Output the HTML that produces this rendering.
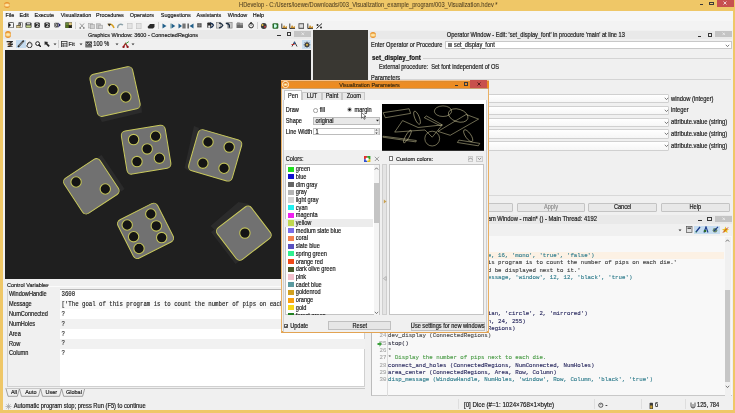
<!DOCTYPE html><html><head><meta charset="utf-8"><style>
*{margin:0;padding:0;box-sizing:border-box}
html,body{width:735px;height:413px;overflow:hidden;background:#f0f0f0;font-family:"Liberation Sans",sans-serif;color:#1e1e1e}
.a{position:absolute}
.t{position:absolute;white-space:nowrap;line-height:0;height:0;-webkit-text-stroke-width:0.17px}
.m{position:absolute;white-space:pre;line-height:0;height:0;font-family:"Liberation Mono",monospace;-webkit-text-stroke-width:0.12px}
svg{position:absolute;left:0;top:0}
</style></head><body><div id="w" style="position:absolute;left:0;top:0;width:735px;height:413px;overflow:hidden;will-change:transform;filter:blur(0.3px)">
<div class="a" style="left:0px;top:0px;width:735px;height:10.8px;background:#efc767;"></div>
<div class="a" style="left:0px;top:0px;width:3px;height:413px;background:#efc767;"></div>
<div class="a" style="left:733px;top:0px;width:2px;height:413px;background:#efc767;"></div>
<div class="a" style="left:0px;top:410px;width:735px;height:3px;background:#efc767;"></div>
<div class="a" style="left:4.3px;top:1.9000000000000004px;width:6px;height:6px;border-radius:50%;background:radial-gradient(ellipse 60% 35% at 50% 52%,#fff0c0 0%,#fbd890 50%,#e8922c 100%)"></div>
<div class="t" style="left:239px;top:4.5px;font-size:5.72px;color:#4e3e22;transform:scaleY(1.12);-webkit-text-stroke-width:0.05px">HDevelop - C:/Users/loewe/Downloads/003_Visualization_example_program/003_Visualization.hdev *</div>
<div class="a" style="left:700px;top:4.2px;width:3.2px;height:1.1px;background:#3a3a3a;"></div>
<div class="a" style="left:709.4px;top:1.6px;width:4.4px;height:3.4px;border:0.8px solid #3a3a3a;border-top-width:1.3px"></div>
<div class="a" style="left:3px;top:10.8px;width:730px;height:19.2px;background:#f3f3f3;"></div>
<div class="a" style="left:3px;top:10.8px;width:730px;height:10.2px;background:#f6f6f6;"></div>
<div class="t" style="left:5.5px;top:15.3px;font-size:5.45px;color:#202020;transform:scaleY(1.12);">File</div>
<div class="t" style="left:19.5px;top:15.3px;font-size:5.45px;color:#202020;transform:scaleY(1.12);">Edit</div>
<div class="t" style="left:34.5px;top:15.3px;font-size:5.45px;color:#202020;transform:scaleY(1.12);">Execute</div>
<div class="t" style="left:60.8px;top:15.3px;font-size:5.45px;color:#202020;transform:scaleY(1.12);">Visualization</div>
<div class="t" style="left:96px;top:15.3px;font-size:5.45px;color:#202020;transform:scaleY(1.12);">Procedures</div>
<div class="t" style="left:129.8px;top:15.3px;font-size:5.45px;color:#202020;transform:scaleY(1.12);">Operators</div>
<div class="t" style="left:160.8px;top:15.3px;font-size:5.45px;color:#202020;transform:scaleY(1.12);">Suggestions</div>
<div class="t" style="left:196.5px;top:15.3px;font-size:5.45px;color:#202020;transform:scaleY(1.12);">Assistants</div>
<div class="t" style="left:227.8px;top:15.3px;font-size:5.45px;color:#202020;transform:scaleY(1.12);">Window</div>
<div class="t" style="left:252.8px;top:15.3px;font-size:5.45px;color:#202020;transform:scaleY(1.12);">Help</div>
<svg class="a" style="left:7.9px;top:22.1px" width="6" height="6.3" viewBox="0 0 6 6.3"><rect x="0.4" y="0.4" width="5.2" height="5.5" rx="1" fill="#f4f4f4" stroke="#2a2a2a" stroke-width="0.8"/><path d="M0.6 0.8 L3 3.1 L0.6 5.6Z" fill="#151515"/></svg>
<svg class="a" style="left:16.4px;top:22.1px" width="7" height="6.3" viewBox="0 0 7 6.3"><rect x="2.5" y="0.4" width="4" height="5.2" rx="0.8" fill="#eee" stroke="#444" stroke-width="0.6"/><path d="M3.5 0.8 q1.5 1.2 0 3 H1" stroke="#111" stroke-width="1.1" fill="none"/><path d="M0.3 3.5 H4.5 L4 5.9 H0.6Z" fill="#d8c890" stroke="#5a4a2a" stroke-width="0.5"/></svg>
<svg class="a" style="left:25.2px;top:22.1px" width="7" height="6.3" viewBox="0 0 7 6.3"><rect x="0.5" y="0.4" width="6" height="5.5" rx="1.2" fill="#2e2e2e"/><rect x="1.8" y="0.9" width="3.4" height="1.6" fill="#ccc"/><rect x="1.2" y="3.4" width="4.6" height="2.2" fill="#c8d890"/></svg>
<svg class="a" style="left:34.1px;top:22px" width="6.2" height="6.2" viewBox="0 0 6.2 6.2"><rect x="0.4" y="0.4" width="5.4" height="5.4" rx="1.2" fill="#2a2a2a"/><path d="M1.8 2 q1.3 -1.3 2.6 0 q0 1.2 -2 2.5 h2.2" stroke="#eee" stroke-width="0.8" fill="none"/></svg>
<svg class="a" style="left:43.6px;top:22px" width="6.2" height="6.2" viewBox="0 0 6.2 6.2"><rect x="0.4" y="0.4" width="5.4" height="5.4" rx="1.2" fill="#2a2a2a"/><path d="M1.8 2 q1.3 -1.3 2.6 0 q0 1.2 -2 2.5 h2.2" stroke="#eee" stroke-width="0.8" fill="none"/></svg>
<svg class="a" style="left:53.9px;top:22px" width="7.2" height="6.2" viewBox="0 0 7.2 6.2"><rect x="0.3" y="0.8" width="4" height="4.6" rx="0.8" fill="#555"/><path d="M1 1.5 L3 3.1 L1 4.7" stroke="#ddd" stroke-width="0.7" fill="none"/><path d="M4 0.5 L6.9 3.1 L4 5.8 L4.8 3.1Z" fill="#1a1a60"/></svg>
<svg class="a" style="left:65px;top:22px" width="7.4" height="6.3" viewBox="0 0 7.4 6.3"><rect x="0.3" y="0.3" width="6.8" height="5.7" fill="#3a3a2a"/><rect x="0.6" y="0.6" width="3" height="2.5" fill="#6a8a3a"/><rect x="3.8" y="0.6" width="3" height="2.5" fill="#e0c880"/><rect x="0.6" y="3.3" width="3" height="2.5" fill="#5a7a20"/><path d="M4 3.6 L6.6 5.8 M6.6 3.6 L4 5.8" stroke="#111" stroke-width="0.7"/></svg>
<div class="a" style="left:75px;top:22px;width:0.8px;height:7px;background:#d0d0d0;"></div>
<svg class="a" style="left:78.7px;top:22.5px" width="6" height="6" viewBox="0 0 6 6"><path d="M1 0.5 L5 5 M5 0.5 L1 5" stroke="#9a9a9a" stroke-width="1"/><circle cx="1.2" cy="5" r="0.9" fill="#888"/><circle cx="4.8" cy="5" r="0.9" fill="#888"/></svg>
<svg class="a" style="left:87.9px;top:22.5px" width="7" height="6" viewBox="0 0 7 6"><rect x="0.5" y="0.5" width="3.8" height="4.5" fill="#d8d8d8" stroke="#a8a8a8" stroke-width="0.6"/><rect x="2.5" y="1.5" width="3.8" height="4.3" fill="#d0d0d0" stroke="#a0a0a0" stroke-width="0.6"/></svg>
<svg class="a" style="left:96.4px;top:22.5px" width="7" height="6" viewBox="0 0 7 6"><rect x="0.5" y="0.8" width="4" height="4.8" fill="#c8c8c8" stroke="#a0a0a0" stroke-width="0.6"/><rect x="2.8" y="2.2" width="3.5" height="3.6" fill="#d8d8d8" stroke="#999" stroke-width="0.6"/></svg>
<svg class="a" style="left:107.4px;top:22.5px" width="8" height="6" viewBox="0 0 8 6"><path d="M1 2 q3 -2 5 1 l1 2" stroke="#d8a020" stroke-width="1.6" fill="none"/><path d="M0.5 0.5 l2 3 l1.5 -2.5z" fill="#333"/></svg>
<svg class="a" style="left:116.6px;top:22.5px" width="7" height="6" viewBox="0 0 7 6"><path d="M6 2 q-3 -2 -5 1 l-0.5 2" stroke="#8aa0a8" stroke-width="1.4" fill="none"/></svg>
<svg class="a" style="left:127px;top:22.5px" width="6" height="6" viewBox="0 0 6 6"><rect x="0.6" y="0.4" width="4.5" height="5.3" fill="#e4e4e4" stroke="#c0c0c0" stroke-width="0.6"/></svg>
<svg class="a" style="left:136px;top:22.5px" width="6" height="6" viewBox="0 0 6 6"><rect x="0.6" y="0.4" width="4.5" height="5.3" fill="#e4e4e4" stroke="#c0c0c0" stroke-width="0.6"/></svg>
<svg class="a" style="left:147px;top:22.5px" width="8" height="6" viewBox="0 0 8 6"><path d="M0.5 4 L3 1 H7.5 V4 L6 5.5 H1.5Z" fill="#2a2a2a"/></svg>
<div class="a" style="left:157.5px;top:22px;width:0.8px;height:7px;background:#d0d0d0;"></div>
<svg class="a" style="left:161.7px;top:22.5px" width="5" height="6" viewBox="0 0 5 6"><path d="M0.5 0.5 L4.5 3 L0.5 5.5Z" fill="#22608a"/></svg>
<svg class="a" style="left:170.3px;top:22.5px" width="6" height="6" viewBox="0 0 6 6"><rect x="0.3" y="0.5" width="1" height="5" fill="#8aa"/><path d="M1.5 0.5 L5.3 3 L1.5 5.5Z" fill="#22608a"/></svg>
<svg class="a" style="left:178px;top:22.5px" width="8" height="6" viewBox="0 0 8 6"><path d="M0.5 0.5 L4 3 L0.5 5.5Z" fill="#22608a"/><rect x="4.5" y="0.5" width="1.3" height="5" fill="#555"/><rect x="6.2" y="0.5" width="1.3" height="5" fill="#555"/></svg>
<svg class="a" style="left:187.4px;top:22.5px" width="7" height="6" viewBox="0 0 7 6"><rect x="0.5" y="0.5" width="1.3" height="5" fill="#444"/><path d="M6.5 0.5 L2.5 3 L6.5 5.5Z" fill="#22608a"/></svg>
<svg class="a" style="left:197px;top:23.2px" width="5" height="4.5" viewBox="0 0 5 4.5"><rect x="0.2" y="0.2" width="4.4" height="4.2" fill="#555"/><path d="M2.2 0.2 V4.4 M0.2 2.2 H4.6" stroke="#aaa" stroke-width="0.5"/></svg>
<svg class="a" style="left:206.8px;top:22.4px" width="8" height="6.4" viewBox="0 0 8 6.4"><rect x="0.3" y="0.5" width="4" height="5.6" rx="0.8" fill="#2a2a2a"/><path d="M3 1 q3 0.5 3.5 2.2 q-0.5 2 -3.5 2.6" stroke="#1a3050" stroke-width="1.3" fill="none"/><rect x="1.2" y="3.5" width="2" height="2.3" fill="#eee"/></svg>
<svg class="a" style="left:216.2px;top:22.4px" width="8" height="6.4" viewBox="0 0 8 6.4"><rect x="0.3" y="0.5" width="4.5" height="5.6" fill="#d8d8d8" stroke="#777" stroke-width="0.6"/><path d="M3 1.2 q3 0.4 3.8 2 q-0.8 2 -3.8 2.6" stroke="#1e2e40" stroke-width="1.3" fill="none"/></svg>
<svg class="a" style="left:224.8px;top:22.4px" width="8" height="6.4" viewBox="0 0 8 6.4"><rect x="2.8" y="0.5" width="4.3" height="5.6" fill="#c8c8c8" stroke="#777" stroke-width="0.6"/><path d="M0.8 1.2 q3 0.2 3.5 2.2 l0 2.4" stroke="#1e2e40" stroke-width="1.4" fill="none"/></svg>
<svg class="a" style="left:235.8px;top:22.4px" width="8" height="6.4" viewBox="0 0 8 6.4"><rect x="0.5" y="1.2" width="6.5" height="4.8" fill="#6a6a6a"/><rect x="1" y="0.4" width="2.8" height="2.6" fill="#8a8a8a"/><rect x="4" y="0.8" width="2.8" height="2.4" fill="#999"/></svg>
<svg class="a" style="left:247.8px;top:22.4px" width="6.5" height="6.5" viewBox="0 0 6.5 6.5"><circle cx="3.1" cy="3.6" r="2.3" fill="#eee" stroke="#2a2a2a" stroke-width="1"/><path d="M3.1 3.6 V2.3 M2.2 0.5 H4" stroke="#2a2a2a" stroke-width="0.8"/></svg>
<div class="a" style="left:257px;top:22px;width:0.8px;height:7px;background:#d0d0d0;"></div>
<svg class="a" style="left:260px;top:22.5px" width="8" height="6" viewBox="0 0 8 6"><circle cx="3.8" cy="3" r="2.9" fill="#3a3a3a"/><circle cx="2.5" cy="2" r="1" fill="#e8c040"/><circle cx="5" cy="3.8" r="1" fill="#c04040"/></svg>
<svg class="a" style="left:271.7px;top:22.5px" width="7" height="6" viewBox="0 0 7 6"><rect x="0.5" y="0.3" width="5.8" height="5.5" rx="1" fill="#2a6a2a"/><path d="M2 1.3 h1.5 a1.8 1.8 0 0 1 0 3.5 h-1.5z" fill="#cfe"/></svg>
<svg class="a" style="left:281px;top:22.5px" width="7" height="6" viewBox="0 0 7 6"><path d="M0.8 0.5 V5.5 H6" stroke="#2a2a2a" stroke-width="0.9" fill="none"/><path d="M1.5 5 L3 2 L4.5 4 L6 3 V5.2Z" fill="#c89030"/></svg>
<svg class="a" style="left:289px;top:22.5px" width="7" height="6" viewBox="0 0 7 6"><path d="M0.8 0.5 V5.5 H6" stroke="#2a2a2a" stroke-width="0.9" fill="none"/><path d="M1.5 5 L3 2 L4.5 4 L6 3 V5.2Z" fill="#c89030"/></svg>
<svg class="a" style="left:307.2px;top:22.5px" width="7" height="6" viewBox="0 0 7 6"><path d="M0.8 0.5 V5.5 H6" stroke="#2a2a2a" stroke-width="0.9" fill="none"/><path d="M1.5 5 L3 2 L4.5 4 L6 3 V5.2Z" fill="#c89030"/></svg>
<svg class="a" style="left:298px;top:22.5px" width="7" height="6" viewBox="0 0 7 6"><rect x="0.5" y="0.3" width="5.5" height="5.5" fill="#444"/><rect x="1.3" y="1.2" width="4" height="3.6" fill="#ddd"/></svg>
<svg class="a" style="left:316.4px;top:22.5px" width="7" height="6" viewBox="0 0 7 6"><path d="M0.5 5.5 L6 0.5" stroke="#2a2a2a" stroke-width="1"/><circle cx="1.5" cy="2" r="1" fill="#2a2a2a"/><circle cx="5" cy="4.5" r="1" fill="#2a2a2a"/></svg>
<div class="a" style="left:311px;top:30px;width:58px;height:185px;background:#ececec;"></div>
<div class="a" style="left:313px;top:30px;width:55px;height:185px;background:#393732;"></div>
<div class="a" style="left:3px;top:30px;width:308px;height:250px;background:#f0f0f0;"></div>
<div class="a" style="left:3px;top:30px;width:308px;height:8.5px;background:#e9e9e9;"></div>
<div class="a" style="left:4.6px;top:31.3px;width:6.4px;height:6.4px;border-radius:50%;background:radial-gradient(ellipse 60% 35% at 50% 52%,#fff0c0 0%,#fbd890 50%,#e8922c 100%)"></div>
<div class="t" style="left:88px;top:34.5px;font-size:5.5px;color:#202020;transform:scaleY(1.12);">Graphics Window: 3600 - ConnectedRegions</div>
<div class="a" style="left:277px;top:35px;width:3.6px;height:1.1px;background:#333;"></div>
<div class="a" style="left:287px;top:32px;width:4.4px;height:4px;border:0.6px solid #3a3a3a;border-top-width:1.1px"></div>
<div class="a" style="left:294.3px;top:30.5px;width:17px;height:6.6px;background:#c4c4c4;"></div>
<svg class="a" style="left:301.0px;top:32.0px" width="3.6" height="3.6" viewBox="0 0 3.6 3.6"><path d="M0.5 0.5 L3.1 3.1 M3.1 0.5 L0.5 3.1" stroke="#f4f4f4" stroke-width="0.7"/></svg>
<svg class="a" style="left:6.2px;top:41px" width="7.2" height="6.4" viewBox="0 0 7.2 6.4"><path d="M0.6 0.6 H6.5 L2.2 3.2 H6.5 L2 5.8 H6.6" stroke="#2a2a2a" stroke-width="1.2" fill="none" stroke-linejoin="round"/><path d="M1.6 2.2 H4.5 M1.8 4.4 H4.8" stroke="#b87030" stroke-width="0.6"/></svg>
<div class="a" style="left:16.1px;top:39.5px;width:9.6px;height:8.4px;background:#c5dcf0;"></div>
<svg class="a" style="left:17px;top:40px" width="8" height="7.5" viewBox="0 0 8 7.5"><path d="M1.5 6.3 L6.3 1.2" stroke="#2a2a2a" stroke-width="1.8" stroke-linecap="round"/><path d="M2 5.8 L5.8 1.7" stroke="#f0f0f0" stroke-width="0.6"/><path d="M0.8 7 L1.4 5.6 L2.2 6.4Z" fill="#222"/></svg>
<svg class="a" style="left:26.4px;top:40.5px" width="7" height="7" viewBox="0 0 7 7"><path d="M1.6 4.2 V2.4 q0.6 -0.8 1.1 0 V1.4 q0.6 -0.8 1.1 0 V1.8 q0.6 -0.8 1.1 0 V2.6 q0.6 -0.6 1 0.1 V4.6 q0 2 -2.4 2.1 q-2 0 -2.9 -2z" fill="#f4f4f4" stroke="#1e1e1e" stroke-width="0.9"/></svg>
<svg class="a" style="left:34.9px;top:40.8px" width="6.5" height="6.5" viewBox="0 0 6.5 6.5"><circle cx="2.6" cy="2.6" r="1.9" fill="#fafafa" stroke="#1e1e1e" stroke-width="1"/><path d="M4 4 L5.9 5.9" stroke="#1e1e1e" stroke-width="1.4" stroke-linecap="round"/></svg>
<svg class="a" style="left:44px;top:40.8px" width="6.5" height="6.5" viewBox="0 0 6.5 6.5"><path d="M0.5 0.5 L0.7 4.3 L1.8 3.3 L4.5 6 L5.8 4.8 L3.1 2.1 L4.3 1Z" fill="#2a2a2a"/></svg>
<svg class="a" style="left:52.5px;top:43.2px" width="4" height="3" viewBox="0 0 4 3"><path d="M0.5 0.5 L2 2.3 L3.5 0.5Z" fill="#333"/></svg>
<div class="a" style="left:58px;top:40px;width:0.8px;height:8px;background:#cfcfcf;"></div>
<svg class="a" style="left:61px;top:41px" width="7" height="6" viewBox="0 0 7 6"><rect x="0.5" y="0.5" width="5.5" height="5.5" fill="none" stroke="#333" stroke-width="0.8"/><path d="M0.5 2.5 H6 M0.5 4.2 H6 M2.4 2.5 V6" stroke="#333" stroke-width="0.6"/></svg>
<div class="t" style="left:68.6px;top:44.2px;font-size:5.5px;color:#202020;transform:scaleY(1.12);">Fit</div>
<svg class="a" style="left:78.5px;top:43.2px" width="4" height="3" viewBox="0 0 4 3"><path d="M0.5 0.5 L2 2.3 L3.5 0.5Z" fill="#333"/></svg>
<svg class="a" style="left:84.8px;top:40.8px" width="7.5" height="6.8" viewBox="0 0 7.5 6.8"><rect x="0.4" y="0.4" width="6.6" height="6" fill="#4a4a4a"/><path d="M0.8 2.2 L2.5 3.5 L4.5 1.8 L6.6 3.6" stroke="#e8e8e8" stroke-width="0.8" fill="none"/><rect x="1" y="4.3" width="5.4" height="1.6" fill="#777"/></svg>
<div class="t" style="left:93.3px;top:44.2px;font-size:5.6px;color:#202020;transform:scaleY(1.12);">100 %</div>
<svg class="a" style="left:115px;top:43.2px" width="4" height="3" viewBox="0 0 4 3"><path d="M0.5 0.5 L2 2.3 L3.5 0.5Z" fill="#333"/></svg>
<svg class="a" style="left:121.5px;top:40.6px" width="8" height="7" viewBox="0 0 8 7"><path d="M1 6.5 L3.5 2.5 L6 6.5" stroke="#a02020" stroke-width="1.3" fill="none"/><circle cx="1.6" cy="5.9" r="1.1" fill="#901818"/><circle cx="5.6" cy="5.9" r="1.1" fill="#901818"/><path d="M3.3 3 L6.8 0.6" stroke="#3a9a3a" stroke-width="1"/></svg>
<svg class="a" style="left:131px;top:43.2px" width="4" height="3" viewBox="0 0 4 3"><path d="M0.5 0.5 L2 2.3 L3.5 0.5Z" fill="#333"/></svg>
<svg class="a" style="left:291.4px;top:41px" width="7" height="6" viewBox="0 0 7 6"><path d="M1 5.5 L3.5 0.8 L6 5.5" stroke="#2a2a2a" stroke-width="0.9" fill="none"/><path d="M0.5 3.5 h3" stroke="#c03030" stroke-width="1"/><path d="M3.5 0.8 V3" stroke="#2a5aa0" stroke-width="1"/></svg>
<div class="a" style="left:301.5px;top:39.5px;width:9.5px;height:9px;background:#c9def0;"></div>
<svg class="a" style="left:302.5px;top:40.5px" width="8" height="7" viewBox="0 0 8 7"><circle cx="4" cy="3.8" r="2.5" fill="#3a3a3a"/><path d="M4 0.3 V7 M0.5 3.8 H7.5 M1.5 1.3 L6.5 6.3 M6.5 1.3 L1.5 6.3" stroke="#555" stroke-width="0.6"/><circle cx="4" cy="3.8" r="1" fill="#e8c040"/></svg>
<div class="a" style="left:4.7px;top:50px;width:306.3px;height:228.7px;background:#1f1f1f;"></div>
<svg class="a" style="left:0;top:0" width="735" height="413" viewBox="0 0 735 413"><defs><clipPath id="gc"><rect x="4.7" y="50" width="306.3" height="228.7"/></clipPath></defs><g clip-path="url(#gc)"><path d="M97 113 L141 103 L142 112.5 L102 122 Z" fill="#2b2b2b"/><g transform="translate(115.03,91.53) rotate(-12.59)"><rect x="-21.85" y="-21.50" width="43.69" height="43.00" rx="4.5" fill="#717171" stroke="#c8c85c" stroke-width="1"/></g><circle cx="100.3" cy="82.1" r="5.2" fill="#141414" stroke="#c2c25a" stroke-width="1.1"/><circle cx="113" cy="89.7" r="5.2" fill="#141414" stroke="#c2c25a" stroke-width="1.1"/><circle cx="125.8" cy="97" r="5.2" fill="#141414" stroke="#c2c25a" stroke-width="1.1"/><g transform="translate(146.12,149.70) rotate(-9.31)"><rect x="-22.23" y="-21.78" width="44.45" height="43.57" rx="4.5" fill="#717171" stroke="#c8c85c" stroke-width="1"/></g><circle cx="133.6" cy="139.6" r="5.2" fill="#141414" stroke="#c2c25a" stroke-width="1.1"/><circle cx="155.6" cy="136.2" r="5.2" fill="#141414" stroke="#c2c25a" stroke-width="1.1"/><circle cx="147.2" cy="148.9" r="5.2" fill="#141414" stroke="#c2c25a" stroke-width="1.1"/><circle cx="137" cy="161.6" r="5.2" fill="#141414" stroke="#c2c25a" stroke-width="1.1"/><circle cx="159.4" cy="158.2" r="5.2" fill="#141414" stroke="#c2c25a" stroke-width="1.1"/><path d="M199 128 L189 171 L184.5 168 L194 126 Z" fill="#2b2b2b"/><g transform="translate(215.20,155.38) rotate(16.11)"><rect x="-22.64" y="-21.32" width="45.28" height="42.64" rx="4.5" fill="#717171" stroke="#c8c85c" stroke-width="1"/></g><circle cx="208" cy="142" r="5.2" fill="#141414" stroke="#c2c25a" stroke-width="1.1"/><circle cx="229.2" cy="147.1" r="5.2" fill="#141414" stroke="#c2c25a" stroke-width="1.1"/><circle cx="202.9" cy="163.2" r="5.2" fill="#141414" stroke="#c2c25a" stroke-width="1.1"/><circle cx="224" cy="168.3" r="5.2" fill="#141414" stroke="#c2c25a" stroke-width="1.1"/><path d="M98 157 L121 191.5 L124.5 189 L101.5 155 Z" fill="#2b2b2b"/><g transform="translate(91.35,186.28) rotate(-33.34)"><rect x="-21.49" y="-21.03" width="42.98" height="42.06" rx="4.5" fill="#717171" stroke="#c8c85c" stroke-width="1"/></g><circle cx="76.1" cy="182" r="5.2" fill="#141414" stroke="#c2c25a" stroke-width="1.1"/><circle cx="105.3" cy="189" r="5.2" fill="#141414" stroke="#c2c25a" stroke-width="1.1"/><g transform="translate(145.53,230.85) rotate(-26.81)"><rect x="-22.26" y="-21.48" width="44.53" height="42.96" rx="4.5" fill="#717171" stroke="#c8c85c" stroke-width="1"/></g><circle cx="127.2" cy="225" r="5.2" fill="#141414" stroke="#c2c25a" stroke-width="1.1"/><circle cx="133.6" cy="236.7" r="5.2" fill="#141414" stroke="#c2c25a" stroke-width="1.1"/><circle cx="139" cy="248.5" r="5.2" fill="#141414" stroke="#c2c25a" stroke-width="1.1"/><circle cx="150.8" cy="214" r="5.2" fill="#141414" stroke="#c2c25a" stroke-width="1.1"/><circle cx="156.3" cy="225.9" r="5.2" fill="#141414" stroke="#c2c25a" stroke-width="1.1"/><circle cx="161.7" cy="237.6" r="5.2" fill="#141414" stroke="#c2c25a" stroke-width="1.1"/><path d="M210.5 226 L238.5 202 L249 204 L216.5 231.5 Z" fill="#2b2b2b"/><path d="M215 229 L239 261.5 L235.5 264 L211 232 Z" fill="#2b2b2b"/><g transform="translate(243.85,233.15) rotate(-37.38)"><rect x="-21.46" y="-19.95" width="42.92" height="39.90" rx="4.5" fill="#717171" stroke="#c8c85c" stroke-width="1"/></g><circle cx="244.9" cy="233.1" r="5.2" fill="#141414" stroke="#c2c25a" stroke-width="1.1"/></g></svg>
<div class="a" style="left:3px;top:278.7px;width:366px;height:131.3px;background:#f0f0f0;"></div>
<div class="t" style="left:7px;top:284.6px;font-size:5.5px;color:#202020;transform:scaleY(1.12);">Control Variables</div>
<div class="a" style="left:48px;top:285.5px;width:317px;height:0.8px;background:#d8d8d8;"></div>
<div class="a" style="left:48px;top:286.3px;width:317px;height:0.8px;background:#fbfbfb;"></div>
<div class="a" style="left:7px;top:288.6px;width:358px;height:98px;background:#ffffff;border:0.7px solid #d0d0d0;border-top-color:#b8b8b8"></div>
<div class="a" style="left:7.8px;top:289.4px;width:52px;height:96.8px;background:#f0f0f0;"></div>
<div class="a" style="left:5px;top:387.6px;width:360px;height:0.6px;background:#c8c8c8;"></div>
<div class="t" style="left:9px;top:294.0px;font-size:5.6px;color:#202020;transform:scaleY(1.12);">WindowHandle</div>
<div class="m" style="left:61.5px;top:294.9px;font-size:5.7px;color:#202020;transform:scaleY(1.15)">3600</div>
<div class="a" style="left:59.8px;top:299.5px;width:305px;height:9.4px;background:#f8f8f8;"></div>
<div class="t" style="left:9px;top:303.9px;font-size:5.6px;color:#202020;transform:scaleY(1.12);">Message</div>
<div class="m" style="left:61.5px;top:304.79999999999995px;font-size:5.7px;color:#202020;transform:scaleY(1.15)">['The goal of this program is to count the number of pips on each die.', 'The number of pips will be displayed next to it.']</div>
<div class="t" style="left:9px;top:313.8px;font-size:5.6px;color:#202020;transform:scaleY(1.12);">NumConnected</div>
<div class="m" style="left:61.5px;top:314.7px;font-size:5.7px;color:#202020;transform:scaleY(1.15)">?</div>
<div class="a" style="left:59.8px;top:319.0px;width:305px;height:9.9px;background:#f1f1f1;"></div>
<div class="t" style="left:9px;top:323.7px;font-size:5.6px;color:#202020;transform:scaleY(1.12);">NumHoles</div>
<div class="m" style="left:61.5px;top:324.59999999999997px;font-size:5.7px;color:#202020;transform:scaleY(1.15)">?</div>
<div class="t" style="left:9px;top:333.6px;font-size:5.6px;color:#202020;transform:scaleY(1.12);">Area</div>
<div class="m" style="left:61.5px;top:334.5px;font-size:5.7px;color:#202020;transform:scaleY(1.15)">?</div>
<div class="a" style="left:59.8px;top:338.8px;width:305px;height:9.9px;background:#f1f1f1;"></div>
<div class="t" style="left:9px;top:343.5px;font-size:5.6px;color:#202020;transform:scaleY(1.12);">Row</div>
<div class="m" style="left:61.5px;top:344.4px;font-size:5.7px;color:#202020;transform:scaleY(1.15)">?</div>
<div class="t" style="left:9px;top:353.4px;font-size:5.6px;color:#202020;transform:scaleY(1.12);">Column</div>
<div class="m" style="left:61.5px;top:354.29999999999995px;font-size:5.7px;color:#202020;transform:scaleY(1.15)">?</div>
<svg class="a" style="left:0;top:0" width="100" height="400" viewBox="0 0 100 400"><path d="M6.1 389 L8.1 396.3 H17.3 L19.3 389" stroke="#6a6a6a" stroke-width="0.6" fill="none"/><path d="M19.5 389 L21.5 396.3 H38.4 L40.4 389" stroke="#6a6a6a" stroke-width="0.6" fill="none"/><path d="M40.6 389 L42.6 396.3 H59.5 L61.5 389" stroke="#6a6a6a" stroke-width="0.6" fill="none"/><path d="M61.7 389 L63.7 396.3 H82.6 L84.6 389" stroke="#6a6a6a" stroke-width="0.6" fill="none"/></svg>
<div class="t" style="left:10.9px;top:392.0px;font-size:5.5px;color:#202020;transform:scaleY(1.12);">All</div>
<div class="t" style="left:25.2px;top:392.0px;font-size:5.5px;color:#202020;transform:scaleY(1.12);">Auto</div>
<div class="t" style="left:45.6px;top:392.0px;font-size:5.5px;color:#202020;transform:scaleY(1.12);">User</div>
<div class="t" style="left:66px;top:392.0px;font-size:5.5px;color:#202020;transform:scaleY(1.12);">Global</div>
<div class="a" style="left:3px;top:397px;width:729px;height:13px;background:#f0f0f0;"></div>
<svg class="a" style="left:4.5px;top:403px" width="7" height="7" viewBox="0 0 7 7"><path d="M3.5 0.5 V6.5 M0.5 3.5 H6.5 M1.4 1.4 L5.6 5.6 M5.6 1.4 L1.4 5.6" stroke="#a0a0a0" stroke-width="0.7"/></svg>
<div class="t" style="left:13.7px;top:406.4px;font-size:5.74px;color:#202020;transform:scaleY(1.12);">Automatic program stop; press Run (F5) to continue</div>
<div class="a" style="left:368.5px;top:30px;width:363.5px;height:185px;background:#f0f0f0;"></div>
<div class="a" style="left:368.5px;top:30.5px;width:363.5px;height:8px;background:#e9e9e9;"></div>
<div class="a" style="left:370.0px;top:31.8px;width:6.4px;height:6.4px;border-radius:50%;background:radial-gradient(ellipse 60% 35% at 50% 52%,#fff0c0 0%,#fbd890 50%,#e8922c 100%)"></div>
<div class="t" style="left:446.8px;top:34.8px;font-size:5.65px;color:#202020;transform:scaleY(1.12);">Operator Window - Edit: 'set_display_font' in procedure 'main' at line 13</div>
<div class="a" style="left:697.6px;top:35.6px;width:3.6px;height:1.1px;background:#333;"></div>
<div class="a" style="left:707.5px;top:32.5px;width:4.4px;height:4px;border:0.6px solid #3a3a3a;border-top-width:1.1px"></div>
<div class="a" style="left:714.8px;top:30.8px;width:17px;height:6.4px;background:#c4c4c4;"></div>
<svg class="a" style="left:721.5px;top:32.2px" width="3.6" height="3.6" viewBox="0 0 3.6 3.6"><path d="M0.5 0.5 L3.1 3.1 M3.1 0.5 L0.5 3.1" stroke="#f4f4f4" stroke-width="0.7"/></svg>
<div class="t" style="left:371px;top:45.2px;font-size:5.63px;color:#202020;transform:scaleY(1.12);">Enter Operator or Procedure</div>
<div class="a" style="left:444.6px;top:41.3px;width:287px;height:7.8px;background:#ffffff;border:0.7px solid #c8c8c8"></div>
<div class="a" style="left:448.2px;top:43px;width:3.5px;height:4.2px;background:#777;"></div>
<div class="t" style="left:454.1px;top:45.3px;font-size:5.63px;color:#202020;transform:scaleY(1.12);">set_display_font</div>
<svg class="a" style="left:725.3px;top:43.7px" width="5" height="3.5" viewBox="0 0 5 3.5"><path d="M0.8 0.8 L2.5 2.6 L4.2 0.8" stroke="#444" stroke-width="0.7" fill="none"/></svg>
<div class="t" style="left:372px;top:57.8px;font-size:6.2px;color:#151515;transform:scaleY(1.12);"><b>set_display_font</b></div>
<div class="a" style="left:422.5px;top:57.7px;width:309px;height:0.7px;background:#d4d4d4;"></div>
<div class="t" style="left:379px;top:66.8px;font-size:5.63px;color:#202020;transform:scaleY(1.12);">External procedure:&nbsp; Set font independent of OS</div>
<div class="a" style="left:371px;top:78.8px;width:360px;height:0.7px;background:#d4d4d4;"></div>
<div class="t" style="left:371px;top:78.2px;font-size:5.63px;color:#202020;transform:scaleY(1.12);">Parameters</div>
<div class="a" style="left:440px;top:93.60000000000001px;width:228.5px;height:9.2px;background:#ffffff;border:0.7px solid #d0d0d0;border-radius:1px;background:linear-gradient(#fff,#f6f6f6)"></div>
<svg class="a" style="left:663.8px;top:96.60000000000001px" width="5" height="3.5" viewBox="0 0 5 3.5"><path d="M0.8 0.8 L2.5 2.6 L4.2 0.8" stroke="#444" stroke-width="0.7" fill="none"/></svg>
<div class="t" style="left:671px;top:98.5px;font-size:5.8px;color:#202020;transform:scaleY(1.12);">window (integer)</div>
<div class="a" style="left:440px;top:105.55000000000001px;width:228.5px;height:9.2px;background:#ffffff;border:0.7px solid #d0d0d0;border-radius:1px;background:linear-gradient(#fff,#f6f6f6)"></div>
<svg class="a" style="left:663.8px;top:108.55000000000001px" width="5" height="3.5" viewBox="0 0 5 3.5"><path d="M0.8 0.8 L2.5 2.6 L4.2 0.8" stroke="#444" stroke-width="0.7" fill="none"/></svg>
<div class="t" style="left:671px;top:110.45px;font-size:5.8px;color:#202020;transform:scaleY(1.12);">integer</div>
<div class="a" style="left:440px;top:117.5px;width:228.5px;height:9.2px;background:#ffffff;border:0.7px solid #d0d0d0;border-radius:1px;background:linear-gradient(#fff,#f6f6f6)"></div>
<svg class="a" style="left:663.8px;top:120.5px" width="5" height="3.5" viewBox="0 0 5 3.5"><path d="M0.8 0.8 L2.5 2.6 L4.2 0.8" stroke="#444" stroke-width="0.7" fill="none"/></svg>
<div class="t" style="left:671px;top:122.39999999999999px;font-size:5.8px;color:#202020;transform:scaleY(1.12);">attribute.value (string)</div>
<div class="a" style="left:440px;top:129.45000000000002px;width:228.5px;height:9.2px;background:#ffffff;border:0.7px solid #d0d0d0;border-radius:1px;background:linear-gradient(#fff,#f6f6f6)"></div>
<svg class="a" style="left:663.8px;top:132.45000000000002px" width="5" height="3.5" viewBox="0 0 5 3.5"><path d="M0.8 0.8 L2.5 2.6 L4.2 0.8" stroke="#444" stroke-width="0.7" fill="none"/></svg>
<div class="t" style="left:671px;top:134.35000000000002px;font-size:5.8px;color:#202020;transform:scaleY(1.12);">attribute.value (string)</div>
<div class="a" style="left:440px;top:141.4px;width:228.5px;height:9.2px;background:#ffffff;border:0.7px solid #d0d0d0;border-radius:1px;background:linear-gradient(#fff,#f6f6f6)"></div>
<svg class="a" style="left:663.8px;top:144.4px" width="5" height="3.5" viewBox="0 0 5 3.5"><path d="M0.8 0.8 L2.5 2.6 L4.2 0.8" stroke="#444" stroke-width="0.7" fill="none"/></svg>
<div class="t" style="left:671px;top:146.3px;font-size:5.8px;color:#202020;transform:scaleY(1.12);">attribute.value (string)</div>
<div class="a" style="left:371px;top:195px;width:360px;height:0.7px;background:#d8d8d8;"></div>
<div class="a" style="left:444px;top:202.5px;width:68.7px;height:9.2px;background:#e8e8e8;border:0.7px solid #c4c4c4;border-radius:1px"></div>
<div class="a" style="left:516.7px;top:202.5px;width:68.7px;height:9.2px;background:#e8e8e8;border:0.7px solid #c4c4c4;border-radius:1px"></div>
<div class="t" style="left:551.0px;top:207px;font-size:5.6px;color:#909090;transform:translateX(-50%) scaleY(1.12);">Apply</div>
<div class="a" style="left:588.3px;top:202.5px;width:68.7px;height:9.2px;background:#e8e8e8;border:0.7px solid #c4c4c4;border-radius:1px"></div>
<div class="t" style="left:622.5999999999999px;top:207px;font-size:5.6px;color:#202020;transform:translateX(-50%) scaleY(1.12);">Cancel</div>
<div class="a" style="left:661px;top:202.5px;width:68.7px;height:9.2px;background:#e8e8e8;border:0.7px solid #c4c4c4;border-radius:1px"></div>
<div class="t" style="left:695.3px;top:207px;font-size:5.6px;color:#202020;transform:translateX(-50%) scaleY(1.12);">Help</div>
<div class="a" style="left:368.5px;top:214.5px;width:363.5px;height:183px;background:#f0f0f0;"></div>
<div class="a" style="left:368.5px;top:215px;width:363.5px;height:8.8px;background:#e9e9e9;"></div>
<div class="a" style="left:370.0px;top:216.3px;width:6.4px;height:6.4px;border-radius:50%;background:radial-gradient(ellipse 60% 35% at 50% 52%,#fff0c0 0%,#fbd890 50%,#e8922c 100%)"></div>
<div class="t" style="left:473.6px;top:219.4px;font-size:5.79px;color:#202020;transform:scaleY(1.12);">Program Window - main* () - Main Thread: 4192</div>
<div class="a" style="left:697.9px;top:219.6px;width:3.8px;height:1.1px;background:#333;"></div>
<div class="a" style="left:707.2px;top:216.8px;width:5px;height:4.2px;border:0.6px solid #3a3a3a;border-top-width:1.1px"></div>
<div class="a" style="left:714.8px;top:215.5px;width:17px;height:6.2px;background:#c4c4c4;"></div>
<svg class="a" style="left:721.5px;top:216.79999999999998px" width="3.6" height="3.6" viewBox="0 0 3.6 3.6"><path d="M0.5 0.5 L3.1 3.1 M3.1 0.5 L0.5 3.1" stroke="#f4f4f4" stroke-width="0.7"/></svg>
<div class="a" style="left:368.5px;top:235.6px;width:363.5px;height:0.8px;background:#d6d6d6;"></div>
<svg class="a" style="left:678.3px;top:228.8px" width="4" height="3" viewBox="0 0 4 3"><path d="M0.5 0.5 L2 2.3 L3.5 0.5Z" fill="#333"/></svg>
<svg class="a" style="left:685.5px;top:226.3px" width="7" height="7" viewBox="0 0 7 7"><rect x="0.5" y="0.5" width="5.5" height="6" fill="#e0e0e0" stroke="#555" stroke-width="0.7"/><rect x="1.5" y="1.5" width="3.5" height="1.5" fill="#555"/></svg>
<div class="a" style="left:694px;top:225.5px;width:26.2px;height:8.5px;background:#c5dcf0;"></div>
<svg class="a" style="left:694.6px;top:226px" width="6" height="7" viewBox="0 0 6 7"><path d="M1 6 L5 1" stroke="#1a3a8a" stroke-width="1.3"/><path d="M0.5 6.5 l1.5 -0.3 l-1.2 -1.2z" fill="#2a8a2a"/></svg>
<svg class="a" style="left:702px;top:226px" width="8" height="7" viewBox="0 0 8 7"><path d="M2 6.5 L4 0.8 L6 6.5" stroke="#1a3a8a" stroke-width="1.1" fill="none"/><circle cx="3" cy="5" r="1.3" fill="#2a6a2a"/></svg>
<svg class="a" style="left:712.4px;top:226px" width="7" height="7" viewBox="0 0 7 7"><circle cx="3" cy="4.3" r="2.3" fill="#6a8a6a"/><path d="M2 5 L6 0.8" stroke="#1a3a8a" stroke-width="1.1"/></svg>
<svg class="a" style="left:721.8px;top:226px" width="8" height="7" viewBox="0 0 8 7"><path d="M3.5 0.5 L4.5 3 L7 3.2 L5 4.8 L5.7 7 L3.5 5.8 L1.3 7 L2 4.8 L0 3.2 L2.5 3Z" fill="#e8c020"/><path d="M1 6.5 L6 1.5" stroke="#c02020" stroke-width="0.9"/></svg>
<div class="a" style="left:371px;top:236.4px;width:361px;height:159.6px;background:#f8f8f8;border-left:0.8px solid #bcbcbc;border-bottom:0.8px solid #c8c8c8"></div>
<div class="a" style="left:386.8px;top:237px;width:0.6px;height:158.5px;background:#dcdcdc;"></div>
<div class="a" style="left:388px;top:251.8px;width:335.5px;height:7px;background:#fcf1e4;"></div>
<div class="a" style="left:724.5px;top:237px;width:6px;height:158.5px;background:#f0f0f0;"></div>
<div class="a" style="left:724.8px;top:289.7px;width:5.4px;height:92.6px;background:#c6c6c6;"></div>
<svg class="a" style="left:725px;top:238.5px" width="5" height="3.5" viewBox="0 0 5 3.5"><path d="M0.8 2.6 L2.5 0.8 L4.2 2.6" stroke="#444" stroke-width="0.7" fill="none"/></svg>
<svg class="a" style="left:725px;top:384.8px" width="5" height="3.5" viewBox="0 0 5 3.5"><path d="M0.8 0.8 L2.5 2.6 L4.2 0.8" stroke="#444" stroke-width="0.7" fill="none"/></svg>
<div class="m" style="left:388px;top:256.0px;font-size:5.74px;color:#2f7c8c;transform:scaleY(1.08)">set_display_font (WindowHandle, 16, 'mono', 'true', 'false')</div>
<div class="m" style="left:388px;top:263.306px;font-size:5.74px;color:#3c3c3c;transform:scaleY(1.08)">Message[0] := 'The goal of this program is to count the number of pips on each die.'</div>
<div class="m" style="left:388px;top:270.612px;font-size:5.74px;color:#3c3c3c;transform:scaleY(1.08)">Message[1] := 'The pips should be displayed next to it.'</div>
<div class="m" style="left:388px;top:277.918px;font-size:5.74px;color:#2f7c8c;transform:scaleY(1.08)">disp_message (WindowHandle, Message, 'window', 12, 12, 'black', 'true')</div>
<div class="m" style="left:388px;top:314.448px;font-size:5.74px;color:#28285e;transform:scaleY(1.08)">median_image (Image, ImageMedian, 'circle', 2, 'mirrored')</div>
<div class="m" style="left:388px;top:321.754px;font-size:5.74px;color:#28285e;transform:scaleY(1.08)">threshold (ImageMedian, Region, 24, 255)</div>
<div class="m" style="left:388px;top:329.06px;font-size:5.74px;color:#28285e;transform:scaleY(1.08)">connection (Region, ConnectedRegions)</div>
<div class="m" style="left:377px;top:336.366px;font-size:5.74px;color:#a8a8a8;width:9.5px;text-align:right;display:block">24</div>
<div class="m" style="left:388px;top:336.366px;font-size:5.74px;color:#4a4a4a;transform:scaleY(1.08)">dev_display (ConnectedRegions)</div>
<div class="m" style="left:377px;top:343.672px;font-size:5.74px;color:#a8a8a8;width:9.5px;text-align:right;display:block">25</div>
<div class="m" style="left:388px;top:343.672px;font-size:5.74px;color:#2e2e40;transform:scaleY(1.08)">stop()</div>
<div class="m" style="left:377px;top:350.978px;font-size:5.74px;color:#a8a8a8;width:9.5px;text-align:right;display:block">26</div>
<div class="m" style="left:388px;top:350.978px;font-size:5.74px;color:#707070;transform:scaleY(1.08)">*</div>
<div class="m" style="left:377px;top:358.284px;font-size:5.74px;color:#a8a8a8;width:9.5px;text-align:right;display:block">27</div>
<div class="m" style="left:388px;top:358.284px;font-size:5.74px;color:#4c9c48;transform:scaleY(1.08)"><span style="color:#707070">*</span> Display the number of pips next to each die.</div>
<div class="m" style="left:377px;top:365.59000000000003px;font-size:5.74px;color:#a8a8a8;width:9.5px;text-align:right;display:block">28</div>
<div class="m" style="left:388px;top:365.59000000000003px;font-size:5.74px;color:#28285e;transform:scaleY(1.08)">connect_and_holes (ConnectedRegions, NumConnected, NumHoles)</div>
<div class="m" style="left:377px;top:372.896px;font-size:5.74px;color:#a8a8a8;width:9.5px;text-align:right;display:block">29</div>
<div class="m" style="left:388px;top:372.896px;font-size:5.74px;color:#28285e;transform:scaleY(1.08)">area_center (ConnectedRegions, Area, Row, Column)</div>
<div class="m" style="left:377px;top:380.202px;font-size:5.74px;color:#a8a8a8;width:9.5px;text-align:right;display:block">30</div>
<div class="m" style="left:388px;top:380.202px;font-size:5.74px;color:#2f7c8c;transform:scaleY(1.08)">disp_message (WindowHandle, NumHoles, 'window', Row, Column, 'black', 'true')</div>
<svg class="a" style="left:377.3px;top:341px" width="5" height="6" viewBox="0 0 5 6"><path d="M0.5 2 H2.5 V0.3 L4.8 3 L2.5 5.7 V4 H0.5Z" fill="#3aa03a"/></svg>
<div class="a" style="left:458px;top:398.5px;width:0.6px;height:10px;background:#dedede;"></div>
<div class="a" style="left:593.5px;top:398.5px;width:0.6px;height:10px;background:#dedede;"></div>
<div class="a" style="left:640.5px;top:398.5px;width:0.6px;height:10px;background:#dedede;"></div>
<div class="a" style="left:684.5px;top:398.5px;width:0.6px;height:10px;background:#dedede;"></div>
<div class="t" style="left:464px;top:405.4px;font-size:6.15px;color:#202020;transform:scaleY(1.12);">[0] Dice (#=1: 1024×768×1×byte)</div>
<svg class="a" style="left:597.8px;top:402px" width="6" height="6" viewBox="0 0 6 6"><circle cx="2.8" cy="3.2" r="2.1" fill="none" stroke="#333" stroke-width="0.8"/><path d="M2.8 3.2 V2" stroke="#333" stroke-width="0.7"/></svg>
<div class="t" style="left:605.5px;top:405.2px;font-size:5.6px;color:#202020;transform:scaleY(1.12);">-</div>
<svg class="a" style="left:649px;top:401.5px" width="5" height="8" viewBox="0 0 5 8"><rect x="0.6" y="0.8" width="3.4" height="6.2" rx="0.6" fill="#3a3a3a"/><rect x="1.2" y="3.5" width="2.2" height="3" fill="#c8a030"/></svg>
<div class="t" style="left:655px;top:405.2px;font-size:5.7px;color:#202020;transform:scaleY(1.12);">6</div>
<svg class="a" style="left:690.3px;top:402px" width="6" height="7" viewBox="0 0 6 7"><path d="M1 0.5 V4 q0 2 2 2 q2 0 2 -2 V0.5" stroke="#333" stroke-width="0.8" fill="none"/><path d="M3 2 V6" stroke="#333" stroke-width="0.7"/></svg>
<div class="t" style="left:697px;top:405.2px;font-size:5.7px;color:#202020;transform:scaleY(1.12);">125, 784</div>
<div class="a" style="left:280.5px;top:80.3px;width:208.8px;height:253.2px;background:#f0f0f0;border:1.8px solid #e9b064;border-top:none;border-bottom:2px solid #e2a352"></div>
<div class="a" style="left:280.5px;top:80.3px;width:208.8px;height:8.3px;background:#ea8b24;background:linear-gradient(#f6c088 0,#f6c088 0.8px,#d88a30 1.3px,#ea8c26 2px,#ee8c20 7.5px,#c9a070 8.3px)"></div>
<div class="a" style="left:282.3px;top:81.3px;width:6.4px;height:6.4px;border-radius:50%;border:0.8px solid #fff0d8;background:radial-gradient(ellipse 60% 35% at 50% 52%,#fff4d0 0%,#fbd890 45%,#e07a1a 100%)"></div>
<div class="t" style="left:339.3px;top:84.7px;font-size:5.47px;color:#3a2a10;transform:scaleY(1.12);">Visualization Parameters</div>
<div class="a" style="left:454.5px;top:85.3px;width:3.5px;height:1.1px;background:#333;"></div>
<div class="a" style="left:463.5px;top:82.3px;width:4.6px;height:4px;border:0.6px solid #3a3a3a;border-top-width:1.1px"></div>
<div class="a" style="left:470px;top:80.3px;width:17.3px;height:7.5px;background:#c8504c;"></div>
<svg class="a" style="left:476.6px;top:82.0px" width="4" height="4" viewBox="0 0 4 4"><path d="M0.5 0.5 L3.5 3.5 M3.5 0.5 L0.5 3.5" stroke="#3a1010" stroke-width="0.8"/></svg>
<div class="a" style="left:283px;top:99.7px;width:203.6px;height:0.7px;background:#c8c8c8;"></div>
<div class="a" style="left:283.9px;top:90.3px;width:18.400000000000034px;height:10.2px;background:#ffffff;border:0.7px solid #c8c8c8;border-bottom:none"></div>
<div class="t" style="left:293.1px;top:95.6px;font-size:5.6px;color:#202020;transform:translateX(-50%) scaleY(1.12);">Pen</div>
<div class="a" style="left:302.3px;top:91.5px;width:19.30000000000001px;height:8.4px;background:#e8e8e8;border:0.7px solid #c8c8c8;border-bottom:none"></div>
<div class="t" style="left:311.95000000000005px;top:95.8px;font-size:5.6px;color:#202020;transform:translateX(-50%) scaleY(1.12);">LUT</div>
<div class="a" style="left:321.6px;top:91.5px;width:20.799999999999955px;height:8.4px;background:#e8e8e8;border:0.7px solid #c8c8c8;border-bottom:none"></div>
<div class="t" style="left:332.0px;top:95.8px;font-size:5.6px;color:#202020;transform:translateX(-50%) scaleY(1.12);">Paint</div>
<div class="a" style="left:342.4px;top:91.5px;width:22.80000000000001px;height:8.4px;background:#e8e8e8;border:0.7px solid #c8c8c8;border-bottom:none"></div>
<div class="t" style="left:353.79999999999995px;top:95.8px;font-size:5.6px;color:#202020;transform:translateX(-50%) scaleY(1.12);">Zoom</div>
<div class="a" style="left:283px;top:100.3px;width:203.6px;height:232px;background:#ffffff;border:0.7px solid #d0d0d0;border-top:none"></div>
<div class="a" style="left:283.6px;top:150px;width:202.4px;height:182px;background:#f0f0f0;"></div>
<div class="t" style="left:285.8px;top:110.2px;font-size:5.6px;color:#202020;transform:scaleY(1.12);">Draw</div>
<svg class="a" style="left:312.8px;top:107.6px" width="5.2" height="5.2" viewBox="0 0 5.2 5.2"><circle cx="2.6" cy="2.6" r="2.1" fill="#fff" stroke="#666" stroke-width="0.6"/></svg>
<div class="t" style="left:319.7px;top:110.2px;font-size:5.6px;color:#202020;transform:scaleY(1.12);">fill</div>
<svg class="a" style="left:347.1px;top:107.4px" width="5.2" height="5.2" viewBox="0 0 5.2 5.2"><circle cx="2.6" cy="2.6" r="2.1" fill="#fff" stroke="#888" stroke-width="0.5"/><circle cx="2.6" cy="2.6" r="1.35" fill="#111"/></svg>
<div class="t" style="left:354.6px;top:110.2px;font-size:5.6px;color:#202020;transform:scaleY(1.12);">margin</div>
<div class="t" style="left:285.8px;top:120.8px;font-size:5.6px;color:#202020;transform:scaleY(1.12);">Shape</div>
<div class="a" style="left:313.3px;top:117px;width:66.4px;height:7.8px;background:#e8e8e8;border:0.7px solid #bcbcbc"></div>
<div class="t" style="left:315.5px;top:120.9px;font-size:5.6px;color:#202020;transform:scaleY(1.12);">original</div>
<svg class="a" style="left:374.5px;top:119.2px" width="5" height="3.5" viewBox="0 0 5 3.5"><path d="M1 0.8 L2.5 2.6 L4 0.8Z" fill="#222"/></svg>
<div class="t" style="left:285.8px;top:131.5px;font-size:5.6px;color:#202020;transform:scaleY(1.12);">Line Width</div>
<div class="a" style="left:313.3px;top:127.6px;width:66.4px;height:7.8px;background:#ffffff;border:0.7px solid #bcbcbc"></div>
<div class="t" style="left:315.5px;top:131.6px;font-size:5.6px;color:#202020;transform:scaleY(1.12);">1</div>
<svg class="a" style="left:374.4px;top:127.9px" width="5" height="7.2" viewBox="0 0 5 7.2"><rect x="0.3" y="0.3" width="4.4" height="6.6" fill="#eee" stroke="#bbb" stroke-width="0.5"/><path d="M1.3 2.6 L2.5 1.2 L3.7 2.6Z M1.3 4.6 L2.5 6 L3.7 4.6Z" fill="#333"/></svg>
<svg class="a" style="left:360.5px;top:111.5px" width="6" height="8" viewBox="0 0 6 8"><path d="M0.5 0.5 V6.2 L2 5 L3.2 7.3 L4.2 6.8 L3 4.6 L5 4.6Z" fill="#fff" stroke="#222" stroke-width="0.6"/></svg>
<svg class="a" style="left:381.7px;top:104.2px" width="102.1" height="46.8" viewBox="0 0 102.1 46.8"><rect x="0" y="0" width="102.1" height="46.8" fill="#000"/><path d="M1.15 8.66 L27.1 4.76 L28.6 9.4 L3.3 13.7Z" stroke="#dcd6a4" stroke-width="0.5" fill="none"/><ellipse cx="35.05" cy="13.7" rx="2.3" ry="7" transform="rotate(-22 35.05 13.7)" stroke="#dcd6a4" stroke-width="0.5" fill="none"/><path d="M20.6 16.6 L12.7 28.1 L43 25.96 L50.2 33.2 L60.3 20.9 L36.1 23.5Z" stroke="#dcd6a4" stroke-width="0.5" fill="none"/><path d="M42.3 13.7 L44.4 11.97 L60.3 20.9 L58.1 21.6Z" stroke="#dcd6a4" stroke-width="0.5" fill="none"/><ellipse cx="61" cy="7.2" rx="8.65" ry="5.3" stroke="#dcd6a4" stroke-width="0.5" fill="none"/><ellipse cx="76.2" cy="11.5" rx="10.1" ry="6.3" transform="rotate(18 76.2 11.5)" stroke="#dcd6a4" stroke-width="0.5" fill="none"/><path d="M56 27.4 L84.1 10.5 L96.6 15.1 L68.2 31.3Z" stroke="#dcd6a4" stroke-width="0.5" fill="none"/><circle cx="50.2" cy="34.6" r="7.4" stroke="#dcd6a4" stroke-width="0.5" fill="none"/><ellipse cx="25.4" cy="32.5" rx="1.8" ry="7.2" transform="rotate(30 25.4 32.5)" stroke="#dcd6a4" stroke-width="0.5" fill="none"/><path d="M1.15 32.2 L34.3 36.5 L34 37.9 L0.87 33.2Z" stroke="#dcd6a4" stroke-width="0.5" fill="none"/><ellipse cx="86.2" cy="31.7" rx="2.7" ry="7" transform="rotate(-35 86.2 31.7)" stroke="#dcd6a4" stroke-width="0.5" fill="none"/><path d="M76.9 36.1 L97.8 39.4 L96.3 41.8 L75.4 38.5Z" stroke="#dcd6a4" stroke-width="0.5" fill="none"/></svg>
<div class="t" style="left:285.8px;top:159.2px;font-size:5.6px;color:#202020;transform:scaleY(1.12);">Colors:</div>
<svg class="a" style="left:364.2px;top:155.6px" width="6.5" height="6.5" viewBox="0 0 6.5 6.5"><rect x="0" y="0" width="3.2" height="3.2" fill="#e03030"/><rect x="3.2" y="0" width="3.2" height="3.2" fill="#30a030"/><rect x="0" y="3.2" width="3.2" height="3.2" fill="#3050d0"/><rect x="3.2" y="3.2" width="3.2" height="3.2" fill="#e0c020"/><rect x="1.8" y="1.8" width="2.8" height="2.8" fill="#fff"/></svg>
<svg class="a" style="left:373.5px;top:156px" width="6" height="6" viewBox="0 0 6 6"><path d="M0.8 0.8 L5 5 M5 0.8 L0.8 5" stroke="#777" stroke-width="0.7"/></svg>
<div class="a" style="left:284.8px;top:164.3px;width:95.5px;height:151px;background:#ffffff;border:0.7px solid #c4c4c4"></div>
<div class="a" style="left:284.8px;top:165px;width:89px;height:150px;overflow:hidden"><div class="a" style="left:3px;top:1.5px;width:5.8px;height:5.2px;background:#20e020"></div><div class="t" style="left:11px;top:4.099999999999994px;font-size:5.6px;transform:scaleY(1.12);color:#202020">green</div><div class="a" style="left:3px;top:9.210000000000008px;width:5.8px;height:5.2px;background:#1010d0"></div><div class="t" style="left:11px;top:11.810000000000002px;font-size:5.6px;transform:scaleY(1.12);color:#202020">blue</div><div class="a" style="left:3px;top:16.919999999999987px;width:5.8px;height:5.2px;background:#646464"></div><div class="t" style="left:11px;top:19.519999999999982px;font-size:5.6px;transform:scaleY(1.12);color:#202020">dim gray</div><div class="a" style="left:3px;top:24.629999999999995px;width:5.8px;height:5.2px;background:#b4b4b4"></div><div class="t" style="left:11px;top:27.22999999999999px;font-size:5.6px;transform:scaleY(1.12);color:#202020">gray</div><div class="a" style="left:3px;top:32.34px;width:5.8px;height:5.2px;background:#d4d4d4"></div><div class="t" style="left:11px;top:34.94px;font-size:5.6px;transform:scaleY(1.12);color:#202020">light gray</div><div class="a" style="left:3px;top:40.04999999999998px;width:5.8px;height:5.2px;background:#20f0f0"></div><div class="t" style="left:11px;top:42.64999999999998px;font-size:5.6px;transform:scaleY(1.12);color:#202020">cyan</div><div class="a" style="left:3px;top:47.75999999999999px;width:5.8px;height:5.2px;background:#f020f0"></div><div class="t" style="left:11px;top:50.359999999999985px;font-size:5.6px;transform:scaleY(1.12);color:#202020">magenta</div><div class="a" style="left:0.7px;top:54.26999999999998px;width:88px;height:7.6px;background:#ececec"></div><div class="a" style="left:3px;top:55.47px;width:5.8px;height:5.2px;background:#c0d850"></div><div class="t" style="left:11px;top:58.06999999999999px;font-size:5.6px;transform:scaleY(1.12);color:#202020">yellow</div><div class="a" style="left:3px;top:63.18000000000001px;width:5.8px;height:5.2px;background:#7c6ce8"></div><div class="t" style="left:11px;top:65.78px;font-size:5.6px;transform:scaleY(1.12);color:#202020">medium slate blue</div><div class="a" style="left:3px;top:70.89000000000001px;width:5.8px;height:5.2px;background:#f48050"></div><div class="t" style="left:11px;top:73.49000000000001px;font-size:5.6px;transform:scaleY(1.12);color:#202020">coral</div><div class="a" style="left:3px;top:78.6px;width:5.8px;height:5.2px;background:#5a50c0"></div><div class="t" style="left:11px;top:81.19999999999999px;font-size:5.6px;transform:scaleY(1.12);color:#202020">slate blue</div><div class="a" style="left:3px;top:86.31px;width:5.8px;height:5.2px;background:#30f090"></div><div class="t" style="left:11px;top:88.91px;font-size:5.6px;transform:scaleY(1.12);color:#202020">spring green</div><div class="a" style="left:3px;top:94.01999999999998px;width:5.8px;height:5.2px;background:#f04818"></div><div class="t" style="left:11px;top:96.62px;font-size:5.6px;transform:scaleY(1.12);color:#202020">orange red</div><div class="a" style="left:3px;top:101.72999999999996px;width:5.8px;height:5.2px;background:#4a5a2a"></div><div class="t" style="left:11px;top:104.32999999999998px;font-size:5.6px;transform:scaleY(1.12);color:#202020">dark olive green</div><div class="a" style="left:3px;top:109.43999999999994px;width:5.8px;height:5.2px;background:#f4c0cc"></div><div class="t" style="left:11px;top:112.03999999999996px;font-size:5.6px;transform:scaleY(1.12);color:#202020">pink</div><div class="a" style="left:3px;top:117.14999999999998px;width:5.8px;height:5.2px;background:#5a9aa0"></div><div class="t" style="left:11px;top:119.75px;font-size:5.6px;transform:scaleY(1.12);color:#202020">cadet blue</div><div class="a" style="left:3px;top:124.85999999999996px;width:5.8px;height:5.2px;background:#d0a020"></div><div class="t" style="left:11px;top:127.45999999999998px;font-size:5.6px;transform:scaleY(1.12);color:#202020">goldenrod</div><div class="a" style="left:3px;top:132.56999999999994px;width:5.8px;height:5.2px;background:#f8a010"></div><div class="t" style="left:11px;top:135.16999999999996px;font-size:5.6px;transform:scaleY(1.12);color:#202020">orange</div><div class="a" style="left:3px;top:140.27999999999997px;width:5.8px;height:5.2px;background:#f8d818"></div><div class="t" style="left:11px;top:142.88px;font-size:5.6px;transform:scaleY(1.12);color:#202020">gold</div><div class="a" style="left:3px;top:147.99px;width:5.8px;height:5.2px;background:#208020"></div><div class="t" style="left:11px;top:150.59000000000003px;font-size:5.6px;transform:scaleY(1.12);color:#202020">forest green</div></div>
<div class="a" style="left:373.5px;top:165px;width:5.6px;height:150px;background:#f4f4f4;"></div>
<div class="a" style="left:374px;top:183.2px;width:4.8px;height:39.8px;background:#c4c4c4;"></div>
<svg class="a" style="left:374px;top:166.5px" width="5" height="3.5" viewBox="0 0 5 3.5"><path d="M0.8 2.6 L2.5 0.8 L4.2 2.6" stroke="#444" stroke-width="0.7" fill="none"/></svg>
<svg class="a" style="left:374px;top:310.5px" width="5" height="3.5" viewBox="0 0 5 3.5"><path d="M0.8 0.8 L2.5 2.6 L4.2 0.8" stroke="#444" stroke-width="0.7" fill="none"/></svg>
<div class="a" style="left:382.2px;top:164.3px;width:4.6px;height:151px;background:#e4e4e4;border:0.6px solid #cfcfcf"></div>
<svg class="a" style="left:383px;top:199.2px" width="4" height="5" viewBox="0 0 4 5"><path d="M0.8 0.5 L3.5 2.5 L0.8 4.5Z" fill="#c8a050"/></svg>
<svg class="a" style="left:383px;top:275.6px" width="4" height="5" viewBox="0 0 4 5"><path d="M3.2 0.5 L0.5 2.5 L3.2 4.5Z" fill="none" stroke="#999" stroke-width="0.6"/></svg>
<div class="a" style="left:389.2px;top:156.3px;width:4.3px;height:4.3px;border:0.7px solid #777;background:#fff"></div>
<div class="t" style="left:396px;top:158.6px;font-size:5.55px;color:#202020;transform:scaleY(1.12);">Custom colors:</div>
<div class="a" style="left:467.6px;top:155.8px;width:5.4px;height:5.9px;background:#ececec;border:0.6px solid #ccc"></div>
<div class="a" style="left:476.3px;top:155.8px;width:6.5px;height:5.9px;background:#ececec;border:0.6px solid #ccc"></div>
<svg class="a" style="left:467.8px;top:157px" width="5" height="3.5" viewBox="0 0 5 3.5"><path d="M0.8 2.6 L2.5 0.8 L4.2 2.6" stroke="#555" stroke-width="0.6" fill="none"/></svg>
<svg class="a" style="left:477px;top:157px" width="5" height="3.5" viewBox="0 0 5 3.5"><path d="M0.8 0.8 L2.5 2.6 L4.2 0.8" stroke="#555" stroke-width="0.6" fill="none"/></svg>
<div class="a" style="left:389px;top:163.9px;width:95px;height:151.5px;background:#ffffff;border:0.7px solid #c4c4c4"></div>
<div class="a" style="left:283.6px;top:324px;width:4.4px;height:4.4px;border:0.7px solid #666;background:#fff"></div>
<svg class="a" style="left:283.6px;top:324px" width="4.4" height="4.4" viewBox="0 0 4.4 4.4"><path d="M0.9 2.2 L1.9 3.4 L3.6 0.8" stroke="#222" stroke-width="0.8" fill="none"/></svg>
<div class="t" style="left:290.2px;top:326.4px;font-size:5.6px;color:#202020;transform:scaleY(1.12);">Update</div>
<div class="a" style="left:328.3px;top:321.3px;width:63px;height:9.2px;background:#e6e6e6;border:0.7px solid #c0c0c0"></div>
<div class="t" style="left:359.8px;top:326px;font-size:5.6px;color:#202020;transform:translateX(-50%) scaleY(1.12);">Reset</div>
<div class="a" style="left:410.5px;top:321.8px;width:74.5px;height:8.8px;background:#e6e6e6;border:0.7px solid #c0c0c0"></div>
<div class="t" style="left:447.7px;top:326.2px;font-size:5.6px;color:#202020;transform:translateX(-50%) scaleY(1.12);">Use settings for new windows</div>
<div class="a" style="left:716.8px;top:0px;width:17.1px;height:6.6px;background:#c7504f;"></div>
<svg class="a" style="left:723.3px;top:1.2999999999999998px" width="4" height="4" viewBox="0 0 4 4"><path d="M0.5 0.5 L3.5 3.5 M3.5 0.5 L0.5 3.5" stroke="#f8f0f0" stroke-width="0.8"/></svg>
</div></body></html>
